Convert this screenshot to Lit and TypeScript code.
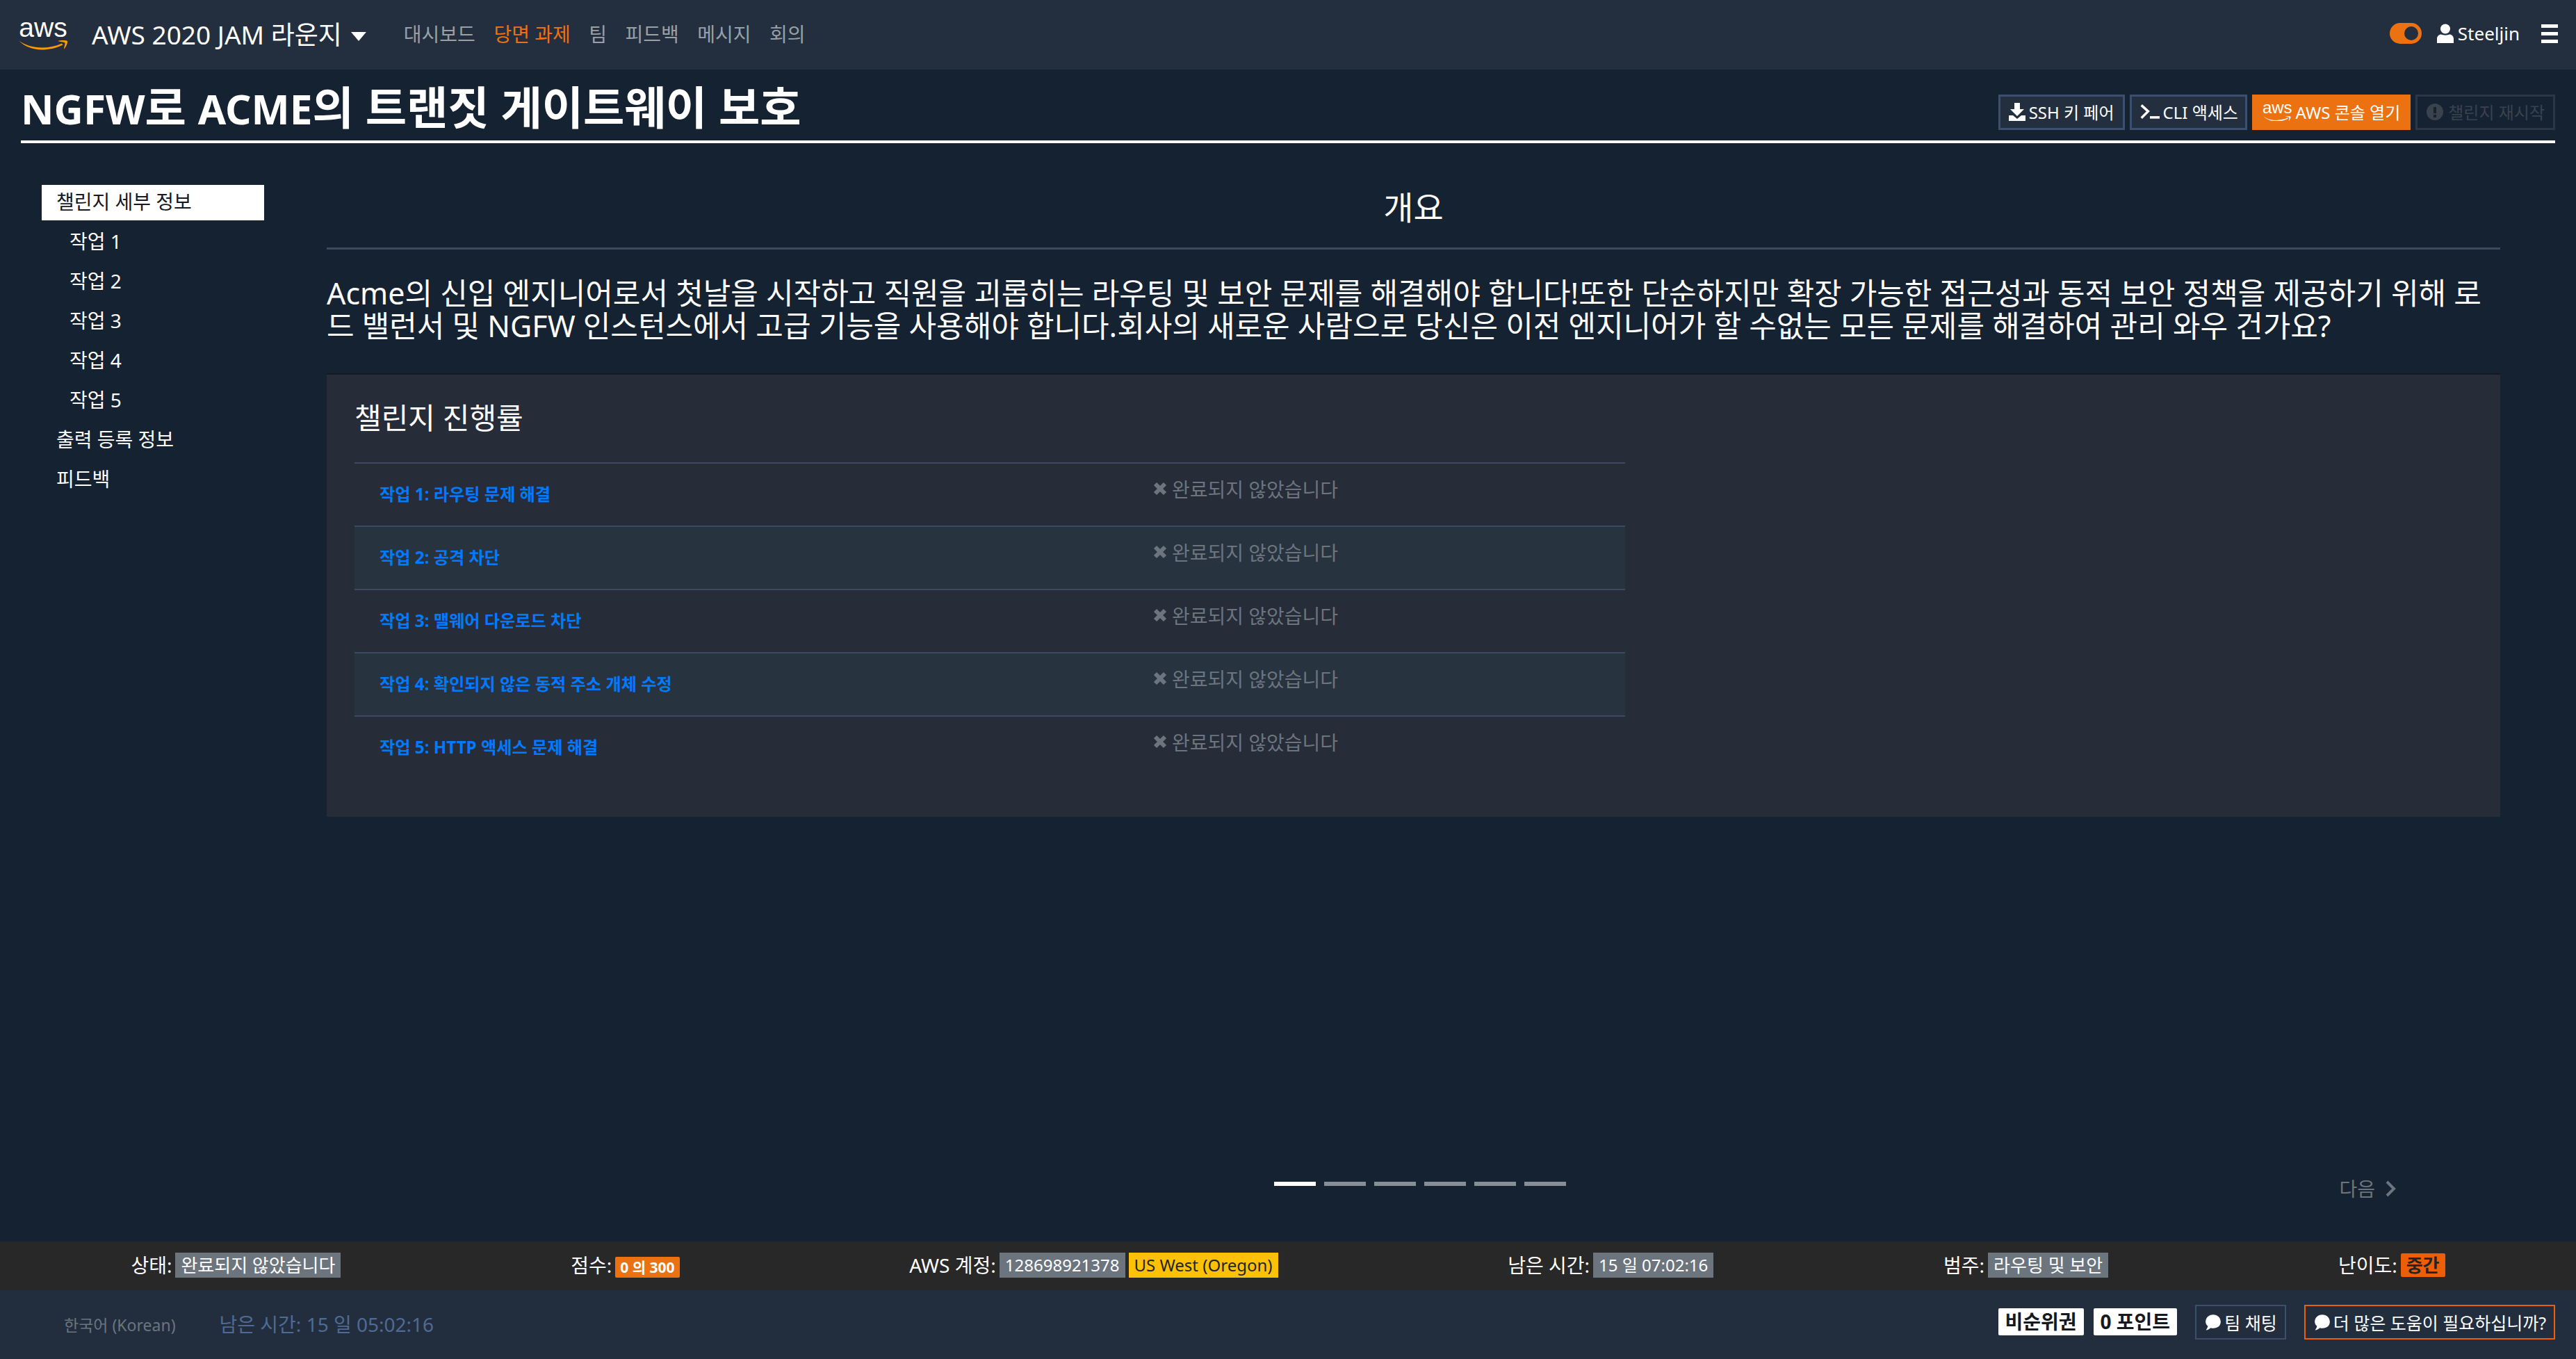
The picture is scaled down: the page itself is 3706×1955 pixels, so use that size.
import { LitElement, html, css } from 'lit';
import { customElement } from 'lit/decorators.js';

const tasks = [
  '작업 1: 라우팅 문제 해결',
  '작업 2: 공격 차단',
  '작업 3: 맬웨어 다운로드 차단',
  '작업 4: 확인되지 않은 동적 주소 개체 수정',
  '작업 5: HTTP 액세스 문제 해결',
];

const smile = (w: number, color: string) => html`
  <svg class="smile" width=${w} viewBox="0 0 72 16">
    <path d="M1 2.500C10 9 22 12.500 34 12.500C44 12.500 54 10.500 63 6.500L64.500 8.500C54 13.500 44 15.500 34 15.500C21 15.500 9 10.500 1 2.500Z" fill=${color}/>
    <path d="M57 3C61 2 68 1.500 71 3C71.500 6 69 12 66 14.500C66 12 68 7 67.500 5.500C66 4.500 60 4 57 3Z" fill=${color}/>
  </svg>`;

const chat = html`<svg class="ic" viewBox="0 0 24 24" width="26" height="26">
  <path d="M12 2C18 2 22 6.300 22 11.500C22 16.700 18 20 12 20C10.800 20 9.700 19.800 8.700 19.500C7 21 4.500 22.500 2.500 22.500C3.800 20.700 4.700 19 5 17.400C3.100 15.800 2 13.800 2 11.500C2 6.300 6 2 12 2Z" fill="#fff"/>
</svg>`;

@customElement('app-root')
export class AppRoot extends LitElement {
  static styles = css`
    :host {
      display: flex;
      flex-direction: column;
      height: 1955px;
      background: #152232;
      color: #fff;
      font-family: "Noto Sans", "Noto Sans CJK KR", sans-serif;
      font-size: 28px;
    }
    .topnav {
      height: 100px;
      flex: none;
      background: #232f3e;
      display: flex;
      align-items: center;
      padding: 0 26px 4px 26px;
      box-sizing: border-box;
    }
    .logo {
      display: flex;
      flex-direction: column;
      align-items: center;
      width: 72px;
      margin: 4px 34px 0 0;
      line-height: 1;
    }
    .logo-text {
      font-size: 39px;
      height: 28px;
      line-height: 24px;
      font-family: "Liberation Sans", sans-serif;
    }
    .smile { display: block; }
    .brand { font-size: 37px; white-space: nowrap; }
    .caret {
      display: inline-block;
      border-left: 11px solid transparent;
      border-right: 11px solid transparent;
      border-top: 13px solid #fff;
      margin: 0 54px 0 13px;
      vertical-align: 5px;
    }
    .menu { display: flex; gap: 26.500px; font-size: 28px; color: #9aa0a6; }
    .menu .on { color: #ec7211; }
    .spacer { flex: 1; }
    .toggle {
      width: 46px;
      height: 30px;
      border-radius: 15px;
      background: #ec7211;
      display: flex;
      align-items: center;
      justify-content: flex-end;
      padding-right: 5px;
      box-sizing: border-box;
      margin-right: 22px;
    }
    .toggle i {
      width: 20px;
      height: 20px;
      border-radius: 50%;
      background: #232f3e;
      display: block;
    }
    .user { display: flex; align-items: center; gap: 6px; font-size: 26px; margin-right: 31px; }
    .burger { display: flex; flex-direction: column; gap: 6px; }
    .burger i { display: block; width: 24px; height: 5px; background: #fff; }

    .title-row {
      margin: 0 30px;
      height: 106px;
      box-sizing: border-box;
      flex: none;
      border-bottom: 4px solid #fff;
      display: flex;
      align-items: flex-start;
      justify-content: space-between;
    }
    h1 { margin: 16px 0 0; font-size: 64.500px; line-height: 76px; font-weight: 700; white-space: nowrap; }
    h1 span { font-size: 58.500px; }
    .actions { display: flex; gap: 7px; margin-top: 36px; }
    .btn {
      height: 51px;
      box-sizing: border-box;
      display: flex;
      align-items: center;
      gap: 5px;
      padding: 0 12px 3px;
      background: #232f3e;
      border: 3px solid #3c4f6e;
      font-size: 24px;
      white-space: nowrap;
    }
    .btn.cli { padding-right: 10px; }
    .btn.orange { background: #ec7211; border-color: #ec7211; }
    .btn.off { background: transparent; border-color: #2c3644; color: #3a424d; gap: 7px; padding-left: 13px; }
    .btn .ic { margin-top: 2px; }
    .mini-logo { display: flex; flex-direction: column; align-items: center; line-height: 1; }
    .mini-logo span { font-family: "Liberation Sans", sans-serif; font-size: 24px; height: 20px; line-height: 17px; }

    .body { flex: 1; display: flex; min-height: 0; }
    .side { width: 320px; margin: 60px 0 0 60px; flex: none; }
    .side div { height: 51px; line-height: 49px; margin-bottom: 6px; padding-left: 21px; font-size: 28px; white-space: nowrap; }
    .side .active { background: #fff; color: #16191f; }
    .side .sub { padding-left: 40px; }
    .content { width: 3127px; margin-left: 90px; flex: none; }
    h2 {
      margin: 0;
      height: 153px;
      box-sizing: border-box;
      padding-top: 61px;
      text-align: center;
      font-size: 47px;
      line-height: 62px;
      font-weight: 400;
      border-bottom: 3px solid #3d4a5c;
    }
    .intro { margin: 39px 0 45px; font-size: 43px; line-height: 47px; }
    .card {
      height: 638px;
      box-sizing: border-box;
      background: #262c38;
      border-top: 2px solid #16191f;
      padding: 31px 40px 32px;
    }
    h3 { margin: 0 0 33px; font-size: 42px; line-height: 62px; font-weight: 400; }
    .tbl { width: 1828px; }
    .row {
      height: 91px;
      box-sizing: border-box;
      border-top: 2px solid #3b4a63;
      display: grid;
      grid-template-columns: 1113px 1fr;
      padding-left: 36px;
    }
    .row.alt { background: #283340; }
    .row a { color: #007bff; font-size: 24.200px; font-weight: 700; line-height: 88px; }
    .row span { color: #6c757d; font-size: 28px; display: flex; align-items: center; height: 72px; gap: 7px; }

    .wizard {
      margin-top: 525px;
      padding-left: 18px;
      display: grid;
      grid-template-columns: 1fr auto 1fr;
      align-items: start;
    }
    .pager { grid-column: 2; display: flex; gap: 12px; }
    .pager i { width: 60px; height: 6px; background: #868e96; display: block; }
    .pager i.on { background: #fff; }
    .next {
      grid-column: 3;
      justify-self: end;
      margin: -10px 150px 0 0;
      color: #6c757d;
      font-size: 28px;
      display: flex;
      align-items: center;
      gap: 14px;
      line-height: 40px;
    }

    .stats {
      height: 70px;
      flex: none;
      box-sizing: border-box;
      padding: 0 23px 2px;
      background: #282828;
      display: flex;
      align-items: center;
      justify-content: space-around;
      font-size: 28px;
    }
    .stat { display: flex; align-items: center; gap: 5px; white-space: nowrap; line-height: 36px; }
    .badge { background: #6c757d; height: 36px; line-height: 36px; padding: 0 8px; font-size: 26px; }
    .badge.latin { font-size: 24px; }
    .badge.warn { background: #ffc107; color: #212529; }
    .badge.small { height: 30px; line-height: 30px; font-size: 21px; font-weight: 700; background: #ec7211; border-radius: 2px; padding: 0 7px; margin-top: 6px; }
    .badge.hard { height: 34px; line-height: 34px; font-weight: 700; background: #ec5f06; color: #212529; border-radius: 2px; }

    .footer {
      height: 99px;
      flex: none;
      box-sizing: border-box;
      background: #222e3e;
      display: flex;
      align-items: center;
      padding: 0 30px 8px 92px;
    }
    .lang { color: #6c757d; font-size: 23px; margin-right: 63px; margin-top: 6px; }
    .remain { color: #4f6a94; font-size: 28px; margin-top: 4px; }
    .pill { background: #fff; color: #16191f; font-size: 28px; font-weight: 700; height: 39px; line-height: 39px; padding: 0 10px; border-radius: 2px; margin-right: 14px; white-space: nowrap; }
    .outline {
      height: 50px;
      box-sizing: border-box;
      border: 2px solid #3c4f6e;
      display: flex;
      align-items: center;
      gap: 3px;
      padding: 0 11px;
      font-size: 25px;
      white-space: nowrap;
      margin-left: 12px;
    }
    .outline.hot { border-color: #ec5f06; margin-left: 26px; }
    .ic { flex: none; }
  `;

  render() {
    return html`
      <div class="topnav">
        <div class="logo"><span class="logo-text">aws</span>${smile(72, '#ff9900')}</div>
        <div class="brand">AWS 2020 JAM 라운지<span class="caret"></span></div>
        <div class="menu">
          <span>대시보드</span><span class="on">당면 과제</span><span>팀</span><span>피드백</span><span>메시지</span><span>회의</span>
        </div>
        <div class="spacer"></div>
        <div class="toggle"><i></i></div>
        <div class="user">
          <svg width="24" height="28" viewBox="0 0 24 28">
            <circle cx="12" cy="7.500" r="7" fill="#fff"/>
            <path d="M0 28V22C0 18 3 15.500 6 15.500C9 17 15 17 18 15.500C21 15.500 24 18 24 22V28Z" fill="#fff"/>
          </svg>
          Steeljin
        </div>
        <div class="burger"><i></i><i></i><i></i></div>
      </div>

      <div class="title-row">
        <h1><span>NGFW</span>로 <span>ACME</span>의 트랜짓 게이트웨이 보호</h1>
        <div class="actions">
          <div class="btn">
            <svg class="ic" width="24" height="26" viewBox="0 0 24 26">
              <path d="M8 0H16V9H22L12 19L2 9H8ZM0 18H6L12 23L18 18H24V26H0Z" fill="#fff"/>
            </svg>SSH 키 페어
          </div>
          <div class="btn cli">
            <svg class="ic" width="28" height="26" viewBox="0 0 32 26">
              <path d="M2 2L13 12L2 23" fill="none" stroke="#fff" stroke-width="4"/><rect x="16" y="20" width="16" height="4" fill="#fff"/>
            </svg>CLI 액세스
          </div>
          <div class="btn orange">
            <div class="mini-logo"><span>aws</span>${smile(40, '#fff')}</div>AWS 콘솔 열기
          </div>
          <div class="btn off">
            <svg class="ic" width="24" height="24" viewBox="0 0 24 24">
              <circle cx="12" cy="12" r="12" fill="#3a424d"/><rect x="10" y="5" width="4" height="9" fill="#152232"/><rect x="10" y="16" width="4" height="4" fill="#152232"/>
            </svg>챌린지 재시작
          </div>
        </div>
      </div>

      <div class="body">
        <nav class="side">
          <div class="active">챌린지 세부 정보</div>
          ${[1, 2, 3, 4, 5].map((n) => html`<div class="sub">작업 ${n}</div>`)}
          <div>출력 등록 정보</div>
          <div>피드백</div>
        </nav>
        <main class="content">
          <h2>개요</h2>
          <p class="intro">Acme의 신입 엔지니어로서 첫날을 시작하고 직원을 괴롭히는 라우팅 및 보안 문제를 해결해야 합니다!또한 단순하지만 확장 가능한 접근성과 동적 보안 정책을 제공하기 위해 로드 밸런서 및 NGFW 인스턴스에서 고급 기능을 사용해야 합니다.회사의 새로운 사람으로 당신은 이전 엔지니어가 할 수없는 모든 문제를 해결하여 관리 와우 건가요?</p>
          <section class="card">
            <h3>챌린지 진행률</h3>
            <div class="tbl">
              ${tasks.map((t, i) => html`
                <div class="row ${i % 2 ? 'alt' : ''}">
                  <a>${t}</a>
                  <span>
                    <svg class="ic" width="20" height="20" viewBox="0 0 20 20"><path d="M3 3L17 17M17 3L3 17" stroke="#6c757d" stroke-width="6"/></svg>완료되지 않았습니다
                  </span>
                </div>`)}
            </div>
          </section>
          <div class="wizard">
            <div class="pager"><i class="on"></i><i></i><i></i><i></i><i></i><i></i></div>
            <div class="next">다음
              <svg width="16" height="26" viewBox="0 0 16 26"><path d="M3 3L13 13L3 23" fill="none" stroke="#6c757d" stroke-width="4"/></svg>
            </div>
          </div>
        </main>
      </div>

      <div class="stats">
        <div class="stat">상태: <span class="badge">완료되지 않았습니다</span></div>
        <div class="stat">점수: <span class="badge small">0 의 300</span></div>
        <div class="stat">AWS 계정: <span class="badge latin">128698921378</span><span class="badge latin warn">US West (Oregon)</span></div>
        <div class="stat">남은 시간: <span class="badge latin">15 일 07:02:16</span></div>
        <div class="stat">범주: <span class="badge">라우팅 및 보안</span></div>
        <div class="stat">난이도: <span class="badge hard">중간</span></div>
      </div>

      <div class="footer">
        <span class="lang">한국어 (Korean)</span>
        <span class="remain">남은 시간: 15 일 05:02:16</span>
        <div class="spacer"></div>
        <span class="pill">비순위권</span>
        <span class="pill">0 포인트</span>
        <div class="outline">${chat}팀 채팅</div>
        <div class="outline hot">${chat}더 많은 도움이 필요하십니까?</div>
      </div>
    `;
  }
}
